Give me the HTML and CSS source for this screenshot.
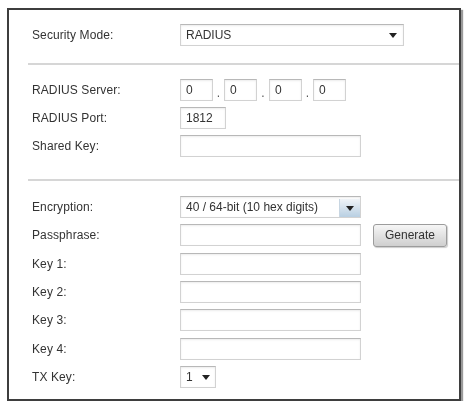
FILE: index.html
```html
<!DOCTYPE html>
<html>
<head>
<meta charset="utf-8">
<link rel="stylesheet" href="styles.css">
</head>
<body>
<div class="frame">
  <div class="section first">
    <div class="row">
      <div class="label">Security Mode:</div>
      <div class="field">
        <div class="select wide"><span>RADIUS</span><span class="arrow"></span></div>
      </div>
    </div>
  </div>
  <div class="sep"></div>
  <div class="section second">
    <div class="row">
      <div class="label">RADIUS Server:</div>
      <div class="field ip">
        <div class="input oct">0</div><span class="dot">.</span>
        <div class="input oct">0</div><span class="dot">.</span>
        <div class="input oct">0</div><span class="dot">.</span>
        <div class="input oct">0</div>
      </div>
    </div>
    <div class="row">
      <div class="label">RADIUS Port:</div>
      <div class="field"><div class="input port">1812</div></div>
    </div>
    <div class="row">
      <div class="label">Shared Key:</div>
      <div class="field"><div class="input long"></div></div>
    </div>
  </div>
  <div class="sep second-sep"></div>
  <div class="section third">
    <div class="row">
      <div class="label">Encryption:</div>
      <div class="field">
        <div class="select long enc"><span>40 / 64-bit (10 hex digits)</span><span class="btn-arrow"><span class="arrow"></span></span></div>
      </div>
    </div>
    <div class="row">
      <div class="label">Passphrase:</div>
      <div class="field"><div class="input long"></div><button class="gen">Generate</button></div>
    </div>
    <div class="row">
      <div class="label">Key 1:</div>
      <div class="field"><div class="input long"></div></div>
    </div>
    <div class="row">
      <div class="label">Key 2:</div>
      <div class="field"><div class="input long"></div></div>
    </div>
    <div class="row">
      <div class="label">Key 3:</div>
      <div class="field"><div class="input long"></div></div>
    </div>
    <div class="row">
      <div class="label">Key 4:</div>
      <div class="field"><div class="input long"></div></div>
    </div>
    <div class="row">
      <div class="label">TX Key:</div>
      <div class="field"><div class="select tx"><span>1</span><span class="arrow"></span></div></div>
    </div>
  </div>
</div>
</body>
</html>
```

FILE: styles.css
```css
html, body {
  margin: 0;
  padding: 0;
  background: #ffffff;
}
body {
  font-family: "Liberation Sans", Arial, sans-serif;
  font-size: 12px;
  color: #333333;
}
.frame {
  box-sizing: border-box;
  margin: 8px 0 0 7px;
  width: 454px;
  height: 393px;
  border: 2px solid #3e3e3e;
  box-shadow: 2px 2px 1px #9a9a9a;
  padding-top: 11px;
  background: #fff;
  filter: blur(0.45px);
}
.section {
  padding-left: 23px;
}
.row {
  display: flex;
  align-items: center;
  height: 28px;
}
.third .row {
  height: 28.33px;
}
.label {
  width: 148px;
  flex: none;
  letter-spacing: 0.1px;
}
.field {
  display: flex;
  align-items: center;
}
.sep {
  margin: 14px 0 0 19px;
  height: 2px;
  background: #d6d6d6;
}
.second {
  margin-top: 11px;
}
.second-sep {
  margin-top: 19px;
}
.third {
  margin-top: 12px;
}
.input, .select {
  box-sizing: border-box;
  height: 22px;
  border: 1px solid #d2d2d2;
  border-top-color: #b8b8b8;
  box-shadow: inset 0 1px 2px rgba(0,0,0,0.08);
  background: #fff;
  padding-left: 5px;
  display: flex;
  align-items: center;
  color: #333;
}
.oct {
  width: 33px;
}
.dot {
  width: 11px;
  text-align: center;
  padding-top: 6px;
  color: #555;
}
.ip .dot:nth-of-type(2) {
  width: 12px;
}
.port {
  width: 46px;
}
.long {
  width: 181px;
}
.select {
  justify-content: space-between;
  padding-right: 6px;
}
.wide {
  width: 224px;
}
.arrow {
  width: 0;
  height: 0;
  border-left: 4px solid transparent;
  border-right: 4px solid transparent;
  border-top: 5px solid #222;
}
.enc {
  padding-right: 0;
}
.btn-arrow {
  align-self: stretch;
  width: 20px;
  margin: 2px 0 0 0;
  display: flex;
  align-items: center;
  justify-content: center;
  background: linear-gradient(#f0f4f8, #b8cfe2);
  border-left: 1px solid #c8d6e2;
}
.tx {
  width: 36px;
  padding-right: 5px;
}
.gen {
  box-sizing: border-box;
  margin-left: 12px;
  width: 74px;
  height: 23px;
  font-family: "Liberation Sans", Arial, sans-serif;
  font-size: 12px;
  color: #333;
  border: 1px solid #9c9c9c;
  border-radius: 3px;
  background: linear-gradient(#f6f6f6, #cfcfcf);
  box-shadow: 1px 1px 1px rgba(0,0,0,0.2);
  padding: 0;
}
```
